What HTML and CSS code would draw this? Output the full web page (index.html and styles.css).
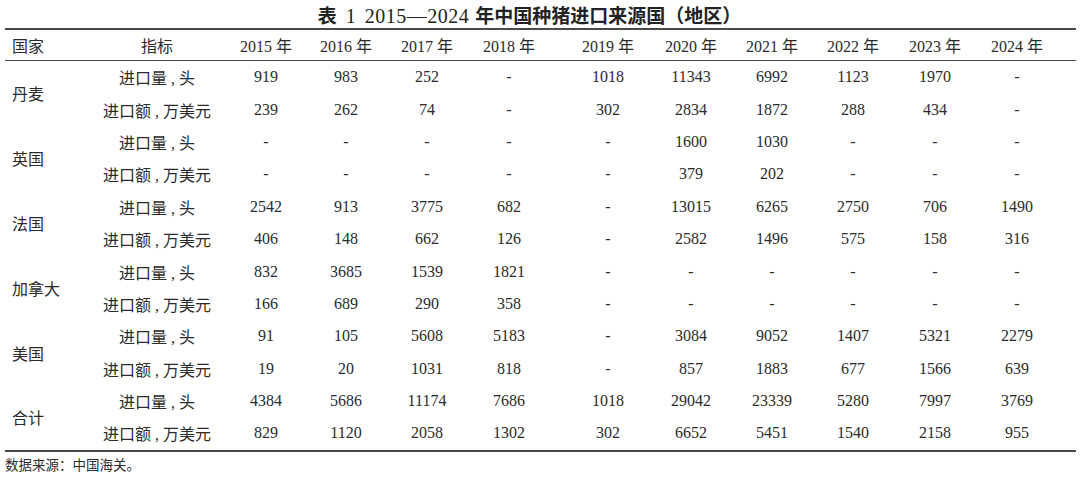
FILE: index.html
```html
<!DOCTYPE html>
<html lang="zh">
<head>
<meta charset="utf-8">
<link rel="stylesheet" href="styles.css">
</head>
<body>
<div class="page">
  <h1 class="title"><span class="cjk">表</span><span class="num n1">1</span><span class="num n2">2015—2024</span><span class="cjk y">年中国种猪进口来源国（地区）</span></h1>
  <table class="data">
    <colgroup>
      <col class="c-country"><col class="c-ind">
      <col class="c80"><col class="c80"><col class="c82"><col class="c82"><col class="c100">
      <col class="c82"><col class="c80"><col class="c82"><col class="c82"><col class="c100">
    </colgroup>
    <thead>
      <tr>
        <th class="country">国家</th><th class="ind">指标</th>
        <th>2015 年</th><th>2016 年</th><th>2017 年</th><th>2018 年</th><th class="y19">2019 年</th>
        <th>2020 年</th><th>2021 年</th><th>2022 年</th><th>2023 年</th><th class="y24">2024 年</th>
      </tr>
    </thead>
    <tbody>
      <tr><td class="country" rowspan="2">丹麦</td><td class="ind">进口量 , 头</td><td>919</td><td>983</td><td>252</td><td>-</td><td class="y19">1018</td><td>11343</td><td>6992</td><td>1123</td><td>1970</td><td class="y24">-</td></tr>
      <tr><td class="ind">进口额 , 万美元</td><td>239</td><td>262</td><td>74</td><td>-</td><td class="y19">302</td><td>2834</td><td>1872</td><td>288</td><td>434</td><td class="y24">-</td></tr>
      <tr><td class="country" rowspan="2">英国</td><td class="ind">进口量 , 头</td><td>-</td><td>-</td><td>-</td><td>-</td><td class="y19">-</td><td>1600</td><td>1030</td><td>-</td><td>-</td><td class="y24">-</td></tr>
      <tr><td class="ind">进口额 , 万美元</td><td>-</td><td>-</td><td>-</td><td>-</td><td class="y19">-</td><td>379</td><td>202</td><td>-</td><td>-</td><td class="y24">-</td></tr>
      <tr><td class="country" rowspan="2">法国</td><td class="ind">进口量 , 头</td><td>2542</td><td>913</td><td>3775</td><td>682</td><td class="y19">-</td><td>13015</td><td>6265</td><td>2750</td><td>706</td><td class="y24">1490</td></tr>
      <tr><td class="ind">进口额 , 万美元</td><td>406</td><td>148</td><td>662</td><td>126</td><td class="y19">-</td><td>2582</td><td>1496</td><td>575</td><td>158</td><td class="y24">316</td></tr>
      <tr><td class="country" rowspan="2">加拿大</td><td class="ind">进口量 , 头</td><td>832</td><td>3685</td><td>1539</td><td>1821</td><td class="y19">-</td><td>-</td><td>-</td><td>-</td><td>-</td><td class="y24">-</td></tr>
      <tr><td class="ind">进口额 , 万美元</td><td>166</td><td>689</td><td>290</td><td>358</td><td class="y19">-</td><td>-</td><td>-</td><td>-</td><td>-</td><td class="y24">-</td></tr>
      <tr><td class="country" rowspan="2">美国</td><td class="ind">进口量 , 头</td><td>91</td><td>105</td><td>5608</td><td>5183</td><td class="y19">-</td><td>3084</td><td>9052</td><td>1407</td><td>5321</td><td class="y24">2279</td></tr>
      <tr><td class="ind">进口额 , 万美元</td><td>19</td><td>20</td><td>1031</td><td>818</td><td class="y19">-</td><td>857</td><td>1883</td><td>677</td><td>1566</td><td class="y24">639</td></tr>
      <tr><td class="country" rowspan="2">合计</td><td class="ind">进口量 , 头</td><td>4384</td><td>5686</td><td>11174</td><td>7686</td><td class="y19">1018</td><td>29042</td><td>23339</td><td>5280</td><td>7997</td><td class="y24">3769</td></tr>
      <tr><td class="ind">进口额 , 万美元</td><td>829</td><td>1120</td><td>2058</td><td>1302</td><td class="y19">302</td><td>6652</td><td>5451</td><td>1540</td><td>2158</td><td class="y24">955</td></tr>
    </tbody>
  </table>
  <p class="note">数据来源：中国海关。</p>
</div>
</body>
</html>
```

FILE: styles.css
```css
html, body {
  margin: 0;
  padding: 0;
  background: #ffffff;
}

.page {
  padding: 0 4px 0 5px;
  color: #2b2b2b;
  font-family: "Liberation Serif", "Noto Sans CJK SC", serif;
}

.title {
  margin: 0;
  height: 28px;
  line-height: 29px;
  text-align: center;
  font-size: 19px;
  font-weight: normal;
  color: #222;
  padding-right: 22px;
  white-space: nowrap;
}

.title .cjk {
  font-family: "Noto Sans CJK SC", sans-serif;
  font-weight: bold;
}

.title .num {
  font-family: "Liberation Serif", serif;
  font-size: 20px;
}

.title .n1 {
  margin-left: 9px;
}

.title .n2 {
  margin-left: 9px;
  letter-spacing: 0.5px;
}

.title .y {
  margin-left: 6px;
}

.data {
  width: 1071px;
  border-collapse: collapse;
  table-layout: fixed;
  border-top: 2px solid #4a4a4a;
  border-bottom: 2px solid #4a4a4a;
  font-size: 16px;
}

.c-country { width: 95px; }
.c-ind { width: 126px; }
.c80 { width: 80px; }
.c82 { width: 82px; }
.c100 { width: 100px; }

.data th,
.data td {
  padding: 0;
  text-align: center;
  font-weight: normal;
  white-space: nowrap;
  vertical-align: middle;
}

.data thead th {
  height: 30px;
  border-bottom: 1.5px solid #4a4a4a;
}

.data tbody td {
  height: 32.4px;
}

.data .country {
  text-align: left;
  padding-left: 7px;
}

.data .ind {
  padding-right: 12px;
}

.data .y19 {
  padding-left: 16px;
}

.data .y24 {
  padding-right: 18px;
}

.note {
  margin: 3px 0 0 0;
  font-size: 13.5px;
  line-height: 18px;
  font-family: "Noto Sans CJK SC", sans-serif;
  color: #2b2b2b;
}
```
